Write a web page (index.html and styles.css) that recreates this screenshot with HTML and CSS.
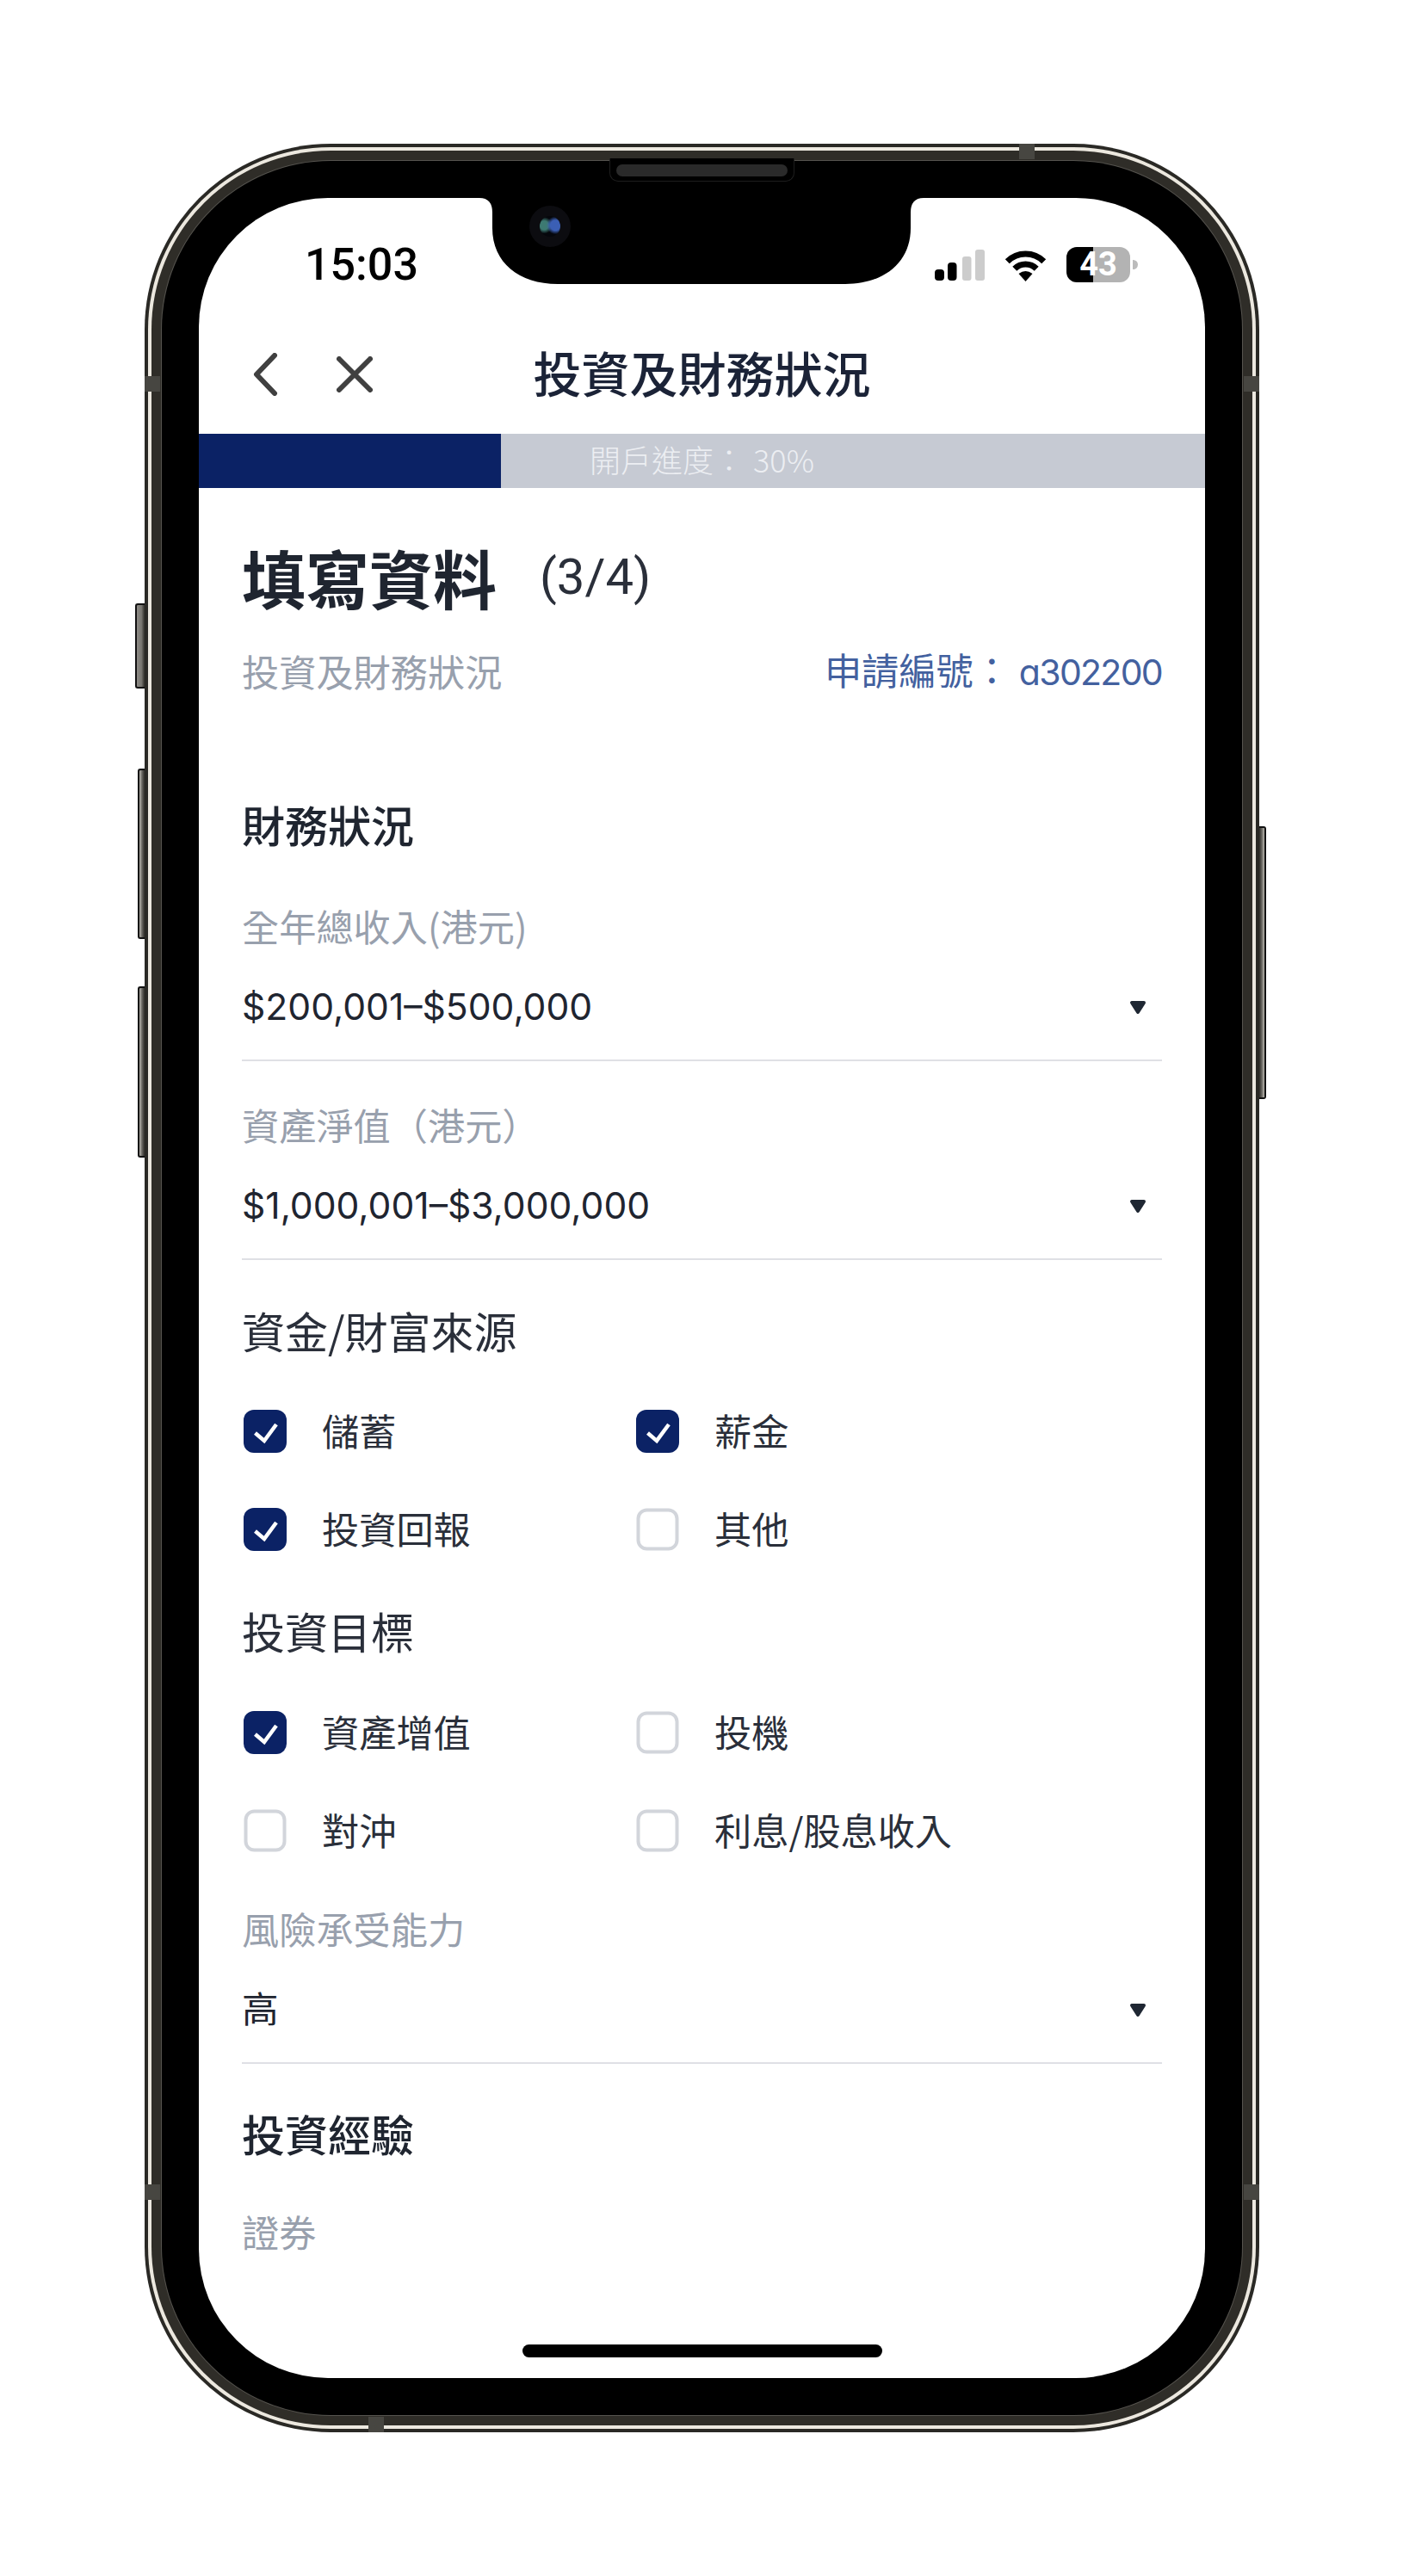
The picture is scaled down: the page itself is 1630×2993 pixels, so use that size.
FILE: index.html
```html
<!DOCTYPE html>
<html lang="zh-Hant">
<head>
<meta charset="utf-8">
<title>投資及財務狀況</title>
<link rel="stylesheet" href="styles.css">
</head>
<body>
<div class="page">
  <div class="phone">
    <span class="side mute"></span>
    <span class="side vol-up"></span>
    <span class="side vol-down"></span>
    <span class="side power"></span>
    <span class="ant ant-top"></span>
    <span class="ant ant-bottom"></span>
    <span class="ant ant-l1"></span>
    <span class="ant ant-l2"></span>
    <span class="ant ant-r1"></span>
    <span class="ant ant-r2"></span>
    <div class="rim">
      <div class="band">
        <div class="hair">
          <div class="bezel">
            <div class="speaker"><span class="grill"></span></div>
            <div class="screen">
              <svg class="notch" viewBox="0 0 516 100" width="516" height="100"><path fill="#000" d="M0 0H516Q501 0 501 17V35C501 75 470 100 425 100H91C46 100 15 75 15 35V17Q15 0 0 0Z"/></svg>
              <span class="camera"><span class="lens"></span></span>

              <div class="status">
                <span class="time">15:03</span>
                <div class="status-icons">
                  <svg class="signal" viewBox="0 0 58 36" width="58" height="36">
                    <rect x="0" y="23" width="11" height="13" rx="4" fill="#000"/>
                    <rect x="15" y="15" width="10.5" height="21" rx="4" fill="#000"/>
                    <rect x="32" y="8" width="10.5" height="28" rx="3" fill="#ccc"/>
                    <rect x="47" y="0" width="11" height="36" rx="3" fill="#ccc"/>
                  </svg>
                  <svg class="wifi" viewBox="0 0 51 38" width="51" height="38">
                    <path d="M4.3 14.8A30 30 0 0 1 46.7 14.8" fill="none" stroke="#000" stroke-width="7"/>
                    <path d="M12.8 23.3A18 18 0 0 1 38.2 23.3" fill="none" stroke="#000" stroke-width="7"/>
                    <path d="M25.5 38L17.5 29Q25.5 23 33.5 29Z" fill="#000"/>
                  </svg>
                  <div class="battery">
                    <span class="batt-level">43</span>
                    <span class="batt-cap"></span>
                  </div>
                </div>
              </div>

              <header class="nav">
                <div class="nav-icons">
                  <svg viewBox="0 0 30 50" width="30" height="50"><path d="M25 3L4 25L25 47" fill="none" stroke="#404040" stroke-width="6" stroke-linecap="round" stroke-linejoin="round"/></svg>
                  <svg viewBox="0 0 42 42" width="42" height="42"><path d="M3 3L39 39M39 3L3 39" fill="none" stroke="#404040" stroke-width="6" stroke-linecap="round"/></svg>
                </div>
                <h1 class="nav-title">投資及財務狀況</h1>
              </header>

              <div class="progress">
                <div class="progress-fill"></div>
                <span class="progress-text">開戶進度<span class="colon">：</span>30%</span>
              </div>

              <main class="content">
                <div class="head">
                  <h2 class="title">填寫資料</h2>
                  <span class="step">(3/4)</span>
                </div>
                <div class="meta">
                  <span class="muted">投資及財務狀況</span>
                  <span class="app-no">申請編號<span class="colon">：</span><span class="app-id">a302200</span></span>
                </div>

                <h3 class="section first">財務狀況</h3>
                <div class="label field-first">全年總收入(港元)</div>
                <div class="select"><span class="value">$200,001–$500,000</span><svg class="caret" viewBox="0 0 20 17" width="20" height="17"><path d="M3 3H17L10 14Z" fill="#1f2733" stroke="#1f2733" stroke-width="4" stroke-linejoin="round"/></svg></div>
                <div class="label field-next">資產淨值（港元）</div>
                <div class="select"><span class="value">$1,000,001–$3,000,000</span><svg class="caret" viewBox="0 0 20 17" width="20" height="17"><path d="M3 3H17L10 14Z" fill="#1f2733" stroke="#1f2733" stroke-width="4" stroke-linejoin="round"/></svg></div>

                <h3 class="group group-a">資金/財富來源</h3>
                <div class="checks checks-a">
                  <div class="check"><svg class="box" viewBox="0 0 50 50" width="50" height="50"><rect width="50" height="50" rx="12" fill="#0b2265"/><path d="M13.500 27L24 36L38 17" fill="none" stroke="#fff" stroke-width="4.500"/></svg><span class="check-text">儲蓄</span></div>
                  <div class="check"><svg class="box" viewBox="0 0 50 50" width="50" height="50"><rect width="50" height="50" rx="12" fill="#0b2265"/><path d="M13.500 27L24 36L38 17" fill="none" stroke="#fff" stroke-width="4.500"/></svg><span class="check-text">薪金</span></div>
                  <div class="check"><svg class="box" viewBox="0 0 50 50" width="50" height="50"><rect width="50" height="50" rx="12" fill="#0b2265"/><path d="M13.500 27L24 36L38 17" fill="none" stroke="#fff" stroke-width="4.500"/></svg><span class="check-text">投資回報</span></div>
                  <div class="check"><svg class="box" viewBox="0 0 50 50" width="50" height="50"><rect x="2.500" y="2.500" width="45" height="45" rx="10" fill="#fff" stroke="#d2d5db" stroke-width="4"/></svg><span class="check-text">其他</span></div>
                </div>

                <h3 class="group group-b">投資目標</h3>
                <div class="checks checks-b">
                  <div class="check"><svg class="box" viewBox="0 0 50 50" width="50" height="50"><rect width="50" height="50" rx="12" fill="#0b2265"/><path d="M13.500 27L24 36L38 17" fill="none" stroke="#fff" stroke-width="4.500"/></svg><span class="check-text">資產增值</span></div>
                  <div class="check"><svg class="box" viewBox="0 0 50 50" width="50" height="50"><rect x="2.500" y="2.500" width="45" height="45" rx="10" fill="#fff" stroke="#d2d5db" stroke-width="4"/></svg><span class="check-text">投機</span></div>
                  <div class="check"><svg class="box" viewBox="0 0 50 50" width="50" height="50"><rect x="2.500" y="2.500" width="45" height="45" rx="10" fill="#fff" stroke="#d2d5db" stroke-width="4"/></svg><span class="check-text">對沖</span></div>
                  <div class="check"><svg class="box" viewBox="0 0 50 50" width="50" height="50"><rect x="2.500" y="2.500" width="45" height="45" rx="10" fill="#fff" stroke="#d2d5db" stroke-width="4"/></svg><span class="check-text">利息/股息收入</span></div>
                </div>

                <div class="label field-risk">風險承受能力</div>
                <div class="select"><span class="value">高</span><svg class="caret" viewBox="0 0 20 17" width="20" height="17"><path d="M3 3H17L10 14Z" fill="#1f2733" stroke="#1f2733" stroke-width="4" stroke-linejoin="round"/></svg></div>

                <h3 class="section exp">投資經驗</h3>
                <div class="label field-sec">證券</div>
              </main>

              <span class="home"></span>
            </div>
          </div>
        </div>
      </div>
    </div>
  </div>
</div>
</body>
</html>
```

FILE: styles.css
```css
* { box-sizing: border-box; }
html, body { margin: 0; padding: 0; background: #fff; }
body {
  font-family: "Noto Sans CJK TC", "Noto Sans", sans-serif;
  color: #1f2530;
}
h1, h2, h3 { margin: 0; font-weight: 400; }

.page { width: 1630px; height: 2993px; padding: 167px 167px 0 168px; }

/* device frame */
.phone { position: relative; width: 1295px; height: 2659px; padding: 4px; background: #2a2925; border-radius: 216px; }
.rim { height: 100%; padding: 4px; background: #ece8df; border-radius: 212px; }
.band { height: 100%; padding: 11px; background: #2f2d28; border-radius: 208px; }
.hair { height: 100%; padding: 1px; background: #55534e; border-radius: 197px; }
.bezel { position: relative; height: 100%; padding: 43px; background: #000; border-radius: 196px; }
.screen { position: relative; height: 100%; background: #fff; border-radius: 150px; overflow: hidden; }

.side { position: absolute; background: linear-gradient(90deg, #8d8b86, #77756f 60%, #2f2d28); border: 2px solid #111; border-right: 0; border-radius: 3px 0 0 3px; }
.mute { left: -11px; top: 534px; width: 11px; height: 99px; }
.vol-up { left: -8px; top: 726px; width: 8px; height: 198px; background: linear-gradient(90deg, #b9b6ae, #5c5a55 60%, #2f2d28); }
.vol-down { left: -8px; top: 979px; width: 8px; height: 199px; background: linear-gradient(90deg, #b9b6ae, #5c5a55 60%, #2f2d28); }
.power { right: -8px; top: 793px; width: 8px; height: 317px; border: 2px solid #111; border-left: 0; border-radius: 0 3px 3px 0; background: linear-gradient(270deg, #b9b6ae, #5c5a55 60%, #2f2d28); }

.ant { position: absolute; background: #474641; }
.ant-top { left: 1016px; top: 0; width: 18px; height: 18px; }
.ant-bottom { left: 260px; bottom: 0; width: 18px; height: 18px; }
.ant-l1 { left: 0; top: 270px; width: 18px; height: 18px; }
.ant-l2 { left: 0; top: 2371px; width: 18px; height: 18px; }
.ant-r1 { right: 0; top: 270px; width: 18px; height: 18px; }
.ant-r2 { right: 0; top: 2371px; width: 18px; height: 18px; }

.speaker { position: absolute; left: 520px; top: -3px; width: 215px; height: 27px; padding: 7px; background: #000; border: 1px solid #1e1e1e; border-top: 0; border-radius: 0 0 10px 10px; }
.grill { display: block; height: 14px; background: #2a2a2a; border-radius: 7px; }

.notch { position: absolute; left: 326px; top: 0; }
.camera { position: absolute; left: 384px; top: 9px; width: 48px; height: 48px; padding: 12px; background: #0c0c10; border-radius: 50%; }
.lens { display: block; width: 24px; height: 24px; border-radius: 50%; background: radial-gradient(circle at 76% 45%, #3b5fb5 0 26%, transparent 46%), radial-gradient(circle at 22% 45%, #3d7a72 0 22%, transparent 42%), #05070c; }

/* status bar */
.status { display: flex; justify-content: space-between; align-items: center; height: 136px; padding: 57px 87px 38px 123px; }
.time { font-family: Roboto, "Noto Sans", sans-serif; font-weight: 500; font-size: 52px; line-height: 41px; color: #000; }
.status-icons { display: flex; align-items: center; gap: 22px; }
.battery { position: relative; display: flex; width: 74px; height: 41px; }
.batt-level { display: block; width: 74px; height: 41px; border-radius: 12px; background: linear-gradient(90deg, #000 0 42%, #b3b3b3 42%); color: #fff; font-family: Roboto, sans-serif; font-weight: 700; font-size: 38px; line-height: 41px; text-align: center; }
.batt-cap { position: absolute; left: 77px; top: 15px; width: 6px; height: 11px; background: #bbb; border-radius: 0 6px 6px 0; }

/* nav */
.nav { position: relative; display: flex; align-items: center; justify-content: center; height: 138px; padding-bottom: 6px; }
.nav-icons { position: absolute; left: 63px; top: 44px; display: flex; align-items: center; gap: 67px; }
.nav-title { font-size: 56px; font-weight: 500; line-height: 70px; color: #1b2337; }

/* progress */
.progress { position: relative; height: 63px; background: #c6cad3; display: flex; align-items: center; justify-content: center; padding-bottom: 5px; }
.progress-fill { position: absolute; left: 0; top: 0; bottom: 0; width: 351px; background: #0b2265; }
.progress-text { position: relative; font-size: 36px; font-weight: 300; line-height: 58px; color: #eceef2; }
.progress-text .colon { margin-right: 10px; }
.colon { font-family: "Noto Sans CJK SC", sans-serif; }

/* content */
.content { padding: 0 50px; }
.head { display: flex; align-items: center; gap: 50px; margin-top: 63px; height: 80px; }
.title { font-size: 74px; font-weight: 700; line-height: 80px; color: #1f2530; }
.step { font-family: Roboto, sans-serif; font-size: 58px; font-weight: 400; line-height: 80px; color: #2a2f3a; }
.meta { display: flex; justify-content: space-between; align-items: center; margin-top: 44px; height: 50px; font-size: 43.200px; line-height: 50px; }
.muted { color: #98a0ad; }
.app-no { color: #43619f; font-weight: 400; }
.app-id { margin-left: 10px; font-family: Inter, sans-serif; font-size: 41px; letter-spacing: -1.700px; font-feature-settings: "cv11"; }

.section { font-size: 50px; font-weight: 500; line-height: 60px; color: #1f2530; }
.section.first { margin-top: 123px; }
.section.exp { margin-top: 50px; }

.label { font-size: 43.200px; line-height: 50px; color: #98a0ad; }
.field-first { margin-top: 63px; }
.field-next { margin-top: 48px; }
.field-risk { margin-top: 63px; }
.field-sec { margin-top: 59px; }

.select { display: flex; justify-content: space-between; align-items: center; margin-top: 45px; padding-bottom: 36px; border-bottom: 2px solid #dfe0e5; }
.value { font-family: Inter, "Noto Sans CJK TC", sans-serif; font-size: 42.600px; line-height: 50px; color: #1f2530; }
.caret { margin-right: 18px; }

.group { font-size: 50px; line-height: 60px; color: #2a2f3a; }
.group-a { margin-top: 51px; }
.group-b { margin-top: 62px; }

.checks { display: grid; grid-template-columns: 456px 1fr; row-gap: 64px; padding-left: 2px; }
.checks-a { margin-top: 63px; }
.checks-b { margin-top: 64px; }
.check { display: flex; align-items: center; gap: 41px; height: 50px; font-size: 43.200px; color: #2a2f3a; }
.check-text { line-height: 50px; padding-bottom: 5px; }
.box { flex: none; }

.home { position: absolute; left: 376px; bottom: 24px; width: 418px; height: 15px; background: #000; border-radius: 8px; }
```
